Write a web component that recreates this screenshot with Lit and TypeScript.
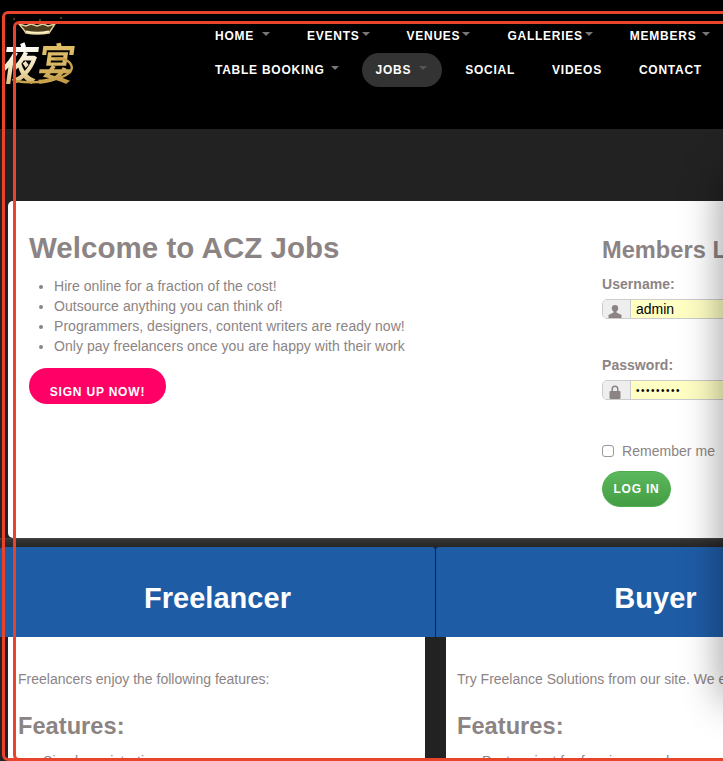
import { LitElement, html, css } from "lit";
import { customElement } from "lit/decorators.js";

const row1 = [
  { t: "HOME", c: "wide" },
  { t: "EVENTS", c: "tight" },
  { t: "VENUES", c: "tight" },
  { t: "GALLERIES", c: "tight" },
  { t: "MEMBERS", c: "mid" },
];
const row2 = [
  { t: "TABLE BOOKING", c: "mid" },
  { t: "JOBS", c: "wide", active: true },
  { t: "SOCIAL", c: "" },
  { t: "VIDEOS", c: "" },
  { t: "CONTACT", c: "" },
];

@customElement("app-root")
export class AppRoot extends LitElement {
  static styles = css`
    :host {
      display: block;
      position: relative;
      width: 723px;
      height: 761px;
      overflow: hidden;
      background: #222;
      font-family: "Liberation Sans", Arial, sans-serif;
      font-size: 14px;
      letter-spacing: 0.04px;
      color: #8c8484;
    }
    .header {
      height: 129px;
      background: #000;
      display: flex;
      box-sizing: border-box;
    }
    .logo {
      width: 201px;
      flex: none;
      position: relative;
    }
    .crown {
      position: absolute;
      left: 12px;
      top: 16px;
    }
    .swoosh {
      position: absolute;
      left: 4px;
      top: 34px;
    }
    .hanzi {
      position: absolute;
      left: 3px;
      top: 35px;
      display: flex;
      font-family: "Noto Sans CJK TC", "Noto Sans CJK SC", sans-serif;
      font-size: 36px;
      line-height: 50px;
      font-weight: 700;
      transform: skewX(-8deg) scaleY(1.22);
    }
    .hanzi span {
      -webkit-background-clip: text;
      background-clip: text;
      color: transparent;
    }
    .hanzi .first {
      background-image: linear-gradient(170deg, #fff 30%, #f0dfb0 65%, #c49c48 100%);
    }
    .hanzi .second {
      background-image: linear-gradient(170deg, #e2c069 10%, #dcb967 55%, #b58c3a 100%);
    }
    nav {
      padding-top: 19px;
      flex: none;
    }
    .row {
      display: flex;
      height: 34px;
      gap: 9px;
    }
    .item {
      display: flex;
      align-items: center;
      padding: 0 14px;
      border-radius: 17px;
      color: #fff;
      font-size: 12px;
      font-weight: 700;
      letter-spacing: 0.75px;
      white-space: nowrap;
    }
    .item.active {
      background: #333;
      padding-right: 15px;
    }
    .caret {
      width: 0;
      height: 0;
      border-left: 4px solid transparent;
      border-right: 4px solid transparent;
      border-top: 4px solid #777;
      margin-bottom: 4px;
    }
    .caret.tight { margin-left: 2px; }
    .caret.mid { margin-left: 6px; }
    .caret.wide { margin-left: 8px; }
    .active .caret { border-top-color: #555; }
    .band {
      height: 72px;
    }
    .card {
      margin-left: 8px;
      height: 337px;
      background: #fff;
      border-radius: 5px 0 0 5px;
      display: flex;
      box-sizing: border-box;
      padding: 29px 0 0 21px;
    }
    .intro {
      width: 573px;
      flex: none;
    }
    h1 {
      margin: 0;
      font-size: 29.5px;
      line-height: 36px;
      font-weight: 700;
    }
    ul {
      margin: 0;
      padding: 0 0 0 25px;
      line-height: 20px;
    }
    .intro ul {
      margin-top: 10px;
    }
    .pill {
      display: flex;
      align-items: center;
      justify-content: center;
      height: 36px;
      border-radius: 18px;
      color: #fff;
      font-size: 12px;
      font-weight: 700;
      letter-spacing: 0.8px;
      box-sizing: border-box;
    }
    .signup {
      width: 137px;
      margin-top: 12px;
      background: #ff0066;
      padding-top: 11px;
    }
    .login {
      width: 300px;
      flex: none;
      padding-top: 5px;
    }
    h2 {
      margin: 0;
      font-size: 23.6px;
      line-height: 30px;
      font-weight: 700;
      white-space: nowrap;
    }
    label.field {
      display: block;
      font-weight: 700;
      line-height: 20px;
    }
    .login h2 + label.field {
      margin-top: 9px;
    }
    .group {
      display: flex;
      height: 20px;
      margin-top: 5px;
      border: 1px solid #ccc;
      border-radius: 5px 0 0 5px;
      box-sizing: border-box;
      overflow: hidden;
    }
    .group + label.field {
      margin-top: 36px;
    }
    .addon {
      width: 28px;
      flex: none;
      background: #eee;
      border-right: 1px solid #ccc;
      box-sizing: border-box;
      display: flex;
      justify-content: center;
      align-items: flex-end;
    }
    .addon svg {
      display: block;
      margin-left: -3px;
    }
    .group input {
      flex: 1;
      min-width: 0;
      border: 0;
      outline: 0;
      background: #ffffc4;
      color: #000;
      font: 14px "Liberation Sans", Arial, sans-serif;
      padding: 0 5px;
      margin: 0;
    }
    .group input.secret {
      font-size: 10px;
      letter-spacing: 1.5px;
    }
    .remember {
      display: flex;
      align-items: center;
      margin-top: 41px;
      height: 20px;
    }
    .remember input {
      appearance: none;
      width: 12px;
      height: 12px;
      margin: 0 8px 0 0;
      background: #fff;
      border: 1px solid #999;
      border-radius: 3px;
      box-sizing: border-box;
    }
    .enter {
      width: 69px;
      margin-top: 10px;
      background: linear-gradient(#5cb85c, #449d44);
      border: 1px solid #4cae4c;
    }
    .seam {
      height: 9px;
      background: linear-gradient(#4a4a4a, #333 20%, #262626);
    }
    .heads {
      display: grid;
      grid-template-columns: 435px 439px;
      gap: 1px;
      width: 875px;
      background: #16233a;
    }
    .head {
      height: 90px;
      background: #1f5ca6;
      border-radius: 3px 3px 0 0;
      color: #fff;
      font-size: 29px;
      font-weight: 700;
      display: flex;
      align-items: center;
      justify-content: center;
      box-sizing: border-box;
      padding-top: 12px;
    }
    .panels {
      display: grid;
      grid-template-columns: 417px 500px;
      gap: 21px;
      margin-left: 8px;
      height: 124px;
      overflow: hidden;
    }
    .panel {
      background: #fff;
      box-sizing: border-box;
      padding: 32px 0 0 10px;
      height: 200px;
      white-space: nowrap;
    }
    .panel + .panel {
      padding-left: 11px;
    }
    .panel p {
      margin: 0;
      line-height: 20px;
      letter-spacing: 0;
    }
    .panel h2 {
      margin-top: 22px;
    }
    .panel ul {
      margin-top: 10px;
    }
    .edge {
      position: absolute;
      left: 723px;
      top: 170px;
      width: 40px;
      height: 530px;
      background: #000;
      box-shadow: 0 0 40px rgba(0, 0, 0, 0.42);
    }
    .frame {
      position: absolute;
      box-sizing: border-box;
      border: 3px solid #e8432b;
      border-radius: 6px;
      right: -12px;
      pointer-events: none;
    }
    .frame.outer {
      left: 2px;
      top: 11px;
      bottom: 0;
    }
    .frame.inner {
      left: 13px;
      top: 21px;
      bottom: 0;
    }
  `;

  private navRow(items: { t: string; c: string; active?: boolean }[]) {
    return html`<div class="row">
      ${items.map(
        (i) => html`<div class="item ${i.active ? "active" : ""}">
          ${i.t}${i.c ? html`<span class="caret ${i.c}"></span>` : null}
        </div>`
      )}
    </div>`;
  }

  render() {
    return html`
      <div class="header">
        <div class="logo">
          <svg class="crown" width="50" height="20" viewBox="0 0 50 20" fill="none">
            <path d="M7 8 L12 14 L14 17 Q25 19 37 17 L39 14 L43 8 L36 10 L31 8 L25 10 L19 8 L14 10 Z" stroke="#e2cf96" stroke-width="1.4" fill="#4a3c1c"/>
            <path d="M14 15.5 Q25 18 37 15.5" stroke="#fff1c4" stroke-width="2"/>
            <circle cx="2" cy="3" r="0.8" fill="#a88c48"/><circle cx="28" cy="4" r="0.8" fill="#a88c48"/><circle cx="49" cy="2" r="0.8" fill="#a88c48"/>
          </svg>
          <div class="hanzi"><span class="first">夜</span><span class="second">宴</span></div>
          <svg class="swoosh" width="72" height="52" viewBox="0 0 72 52" fill="none">
            <path d="M12 47 Q34 51 58 43 Q72 37 66 29 Q60 23 52 25" stroke="#c9a24e" stroke-width="2.4" stroke-linecap="round"/>
          </svg>
        </div>
        <nav>${this.navRow(row1)}${this.navRow(row2)}</nav>
      </div>
      <div class="band"></div>
      <div class="card">
        <div class="intro">
          <h1>Welcome to ACZ Jobs</h1>
          <ul>
            <li>Hire online for a fraction of the cost!</li>
            <li>Outsource anything you can think of!</li>
            <li>Programmers, designers, content writers are ready now!</li>
            <li>Only pay freelancers once you are happy with their work</li>
          </ul>
          <div class="pill signup">SIGN UP NOW!</div>
        </div>
        <div class="login">
          <h2>Members Login</h2>
          <label class="field">Username:</label>
          <div class="group">
            <div class="addon">
              <svg width="14" height="14" viewBox="0 0 14 14" fill="#8c8484">
                <circle cx="7" cy="4.2" r="3.2"/>
                <path d="M5.5 7 h3 v1.5 L13.5 11 V14 H0.5 V11 L5.5 8.5 Z"/>
              </svg>
            </div>
            <input value="admin" readonly />
          </div>
          <label class="field">Password:</label>
          <div class="group">
            <div class="addon">
              <svg width="12" height="14" viewBox="0 0 12 14" fill="#8c8484">
                <path d="M2.5 6 V4 a3.5 3.5 0 0 1 7 0 V6 H8 V4 a2 2 0 0 0 -4 0 V6 Z"/>
                <rect x="0.5" y="6" width="11" height="8" rx="1"/>
              </svg>
            </div>
            <input class="secret" type="password" value="123456789" readonly />
          </div>
          <div class="remember"><input type="checkbox" />Remember me</div>
          <div class="pill enter">LOG IN</div>
        </div>
      </div>
      <div class="seam"></div>
      <div class="heads">
        <div class="head">Freelancer</div>
        <div class="head">Buyer</div>
      </div>
      <div class="panels">
        <div class="panel">
          <p>Freelancers enjoy the following features:</p>
          <h2>Features:</h2>
          <ul><li>Simple registration</li></ul>
        </div>
        <div class="panel">
          <p>Try Freelance Solutions from our site. We enable you to hire online.</p>
          <h2>Features:</h2>
          <ul><li>Post project for free in seconds</li></ul>
        </div>
      </div>
      <div class="edge"></div>
      <div class="frame outer"></div>
      <div class="frame inner"></div>
    `;
  }
}
